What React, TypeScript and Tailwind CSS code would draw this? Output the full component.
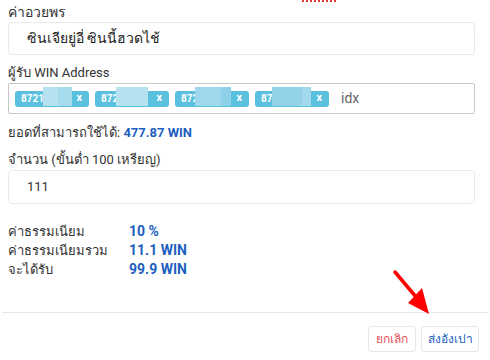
import React from "react";

const TAGS = [
  { text: "8721", blur: [{ l: 28, w: 15, c: "#b6e2f0" }, { l: 43, w: 14, c: "#a6dbed" }] },
  { text: "872", blur: [{ l: 21, w: 32, c: "#b6e2f0" }] },
  { text: "872", blur: [{ l: 20, w: 26, c: "#9fd8ec" }, { l: 46, w: 10, c: "#8dd0e8" }] },
  { text: "87", blur: [{ l: 17, w: 30, c: "#93d3ea" }, { l: 47, w: 9, c: "#a3d9ed" }] },
];

function Tag({ text, blur }: { text: string; blur: { l: number; w: number; c: string }[] }) {
  return (
    <div className="relative flex h-[16px] w-[74px] items-center justify-between rounded-[3px] bg-[#5bc0de] pl-[6px] pr-[7px] text-[10px] font-bold text-white">
      <span>{text}</span>
      <span className="text-[11px]">x</span>
      {blur.map((b, i) => (
        <div
          key={i}
          className="absolute top-[-4px] h-[19px]"
          style={{ left: b.l, width: b.w, background: b.c }}
        />
      ))}
    </div>
  );
}

export default function App() {
  return (
    <div
      className="relative h-[360px] w-[490px] overflow-hidden bg-white text-[#333]"
      style={{ fontFamily: "Roboto, 'Noto Sans', 'DejaVu Sans', sans-serif" }}
    >
      <div className="h-[2px] pl-[302px]">
        <div className="w-[34px] border-t-2 border-dotted border-[#e53935]" />
      </div>

      <div className="flex flex-col px-2">
        <div className="text-[14px] leading-[20px]">ค่าอวยพร</div>
        <div className="flex h-[33px] w-[467px] items-center rounded-[4px] border border-[#e8eaf0] pl-[18px] text-[14px] text-[#222]">
          ซินเจียยู่อี่ ซินนี้ฮวดไช้
        </div>

        <div className="mt-2 text-[13px] leading-[20px]">ผู้รับ WIN Address</div>
        <div className="flex h-[31px] w-[467px] items-center gap-[6px] rounded-[2px] border border-[#c8c8c8] pl-[6px]">
          {TAGS.map((t, i) => (
            <Tag key={i} text={t.text} blur={t.blur} />
          ))}
          <span className="ml-[6px] text-[14px] text-[#666]">idx</span>
        </div>

        <div className="mt-[9px] text-[13px] leading-[20px]">
          ยอดที่สามารถใช้ได้: <span className="font-bold text-[#1d5fc0]">477.87 WIN</span>
        </div>

        <div className="mt-[7px] text-[13px] leading-[20px]">จำนวน (ขั้นต่ำ 100 เหรียญ)</div>
        <div className="flex h-[34px] w-[467px] items-center rounded-[4px] border border-[#e8eaf0] pl-[18px] text-[13px] text-[#333]">
          111
        </div>

        <div className="mt-[18px] flex flex-col text-[13px] leading-[19px]">
          {[
            ["ค่าธรรมเนียม", "10 %"],
            ["ค่าธรรมเนียมรวม", "11.1 WIN"],
            ["จะได้รับ", "99.9 WIN"],
          ].map(([k, v]) => (
            <div key={k} className="flex">
              <span className="w-[121px]">{k}</span>
              <span className="text-[14px] font-bold text-[#1d5fc0]">{v}</span>
            </div>
          ))}
        </div>
      </div>

      <div className="mx-[2px] mt-[33px] border-t border-[#e3e8f2]" />

      <div className="mt-[13px] flex justify-end gap-[5px] pr-[11px]">
        <button className="flex h-[26px] w-[48px] items-center justify-center rounded-[3px] border border-[#e3e6ee] text-[12px] text-[#e4505a]">
          ยกเลิก
        </button>
        <button className="flex h-[26px] w-[58px] items-center justify-center rounded-[3px] border border-[#e3e6ee] text-[12px] text-[#1d5fc0]">
          ส่งอังเปา
        </button>
      </div>

      <svg className="absolute left-0 top-0" width="490" height="360" viewBox="0 0 490 360">
        <line x1="395" y1="272" x2="416" y2="297" stroke="#f00" strokeWidth="3.5" strokeLinecap="round" />
        <polygon points="408,303 422,288 429,314" fill="#f00" />
      </svg>
    </div>
  );
}
